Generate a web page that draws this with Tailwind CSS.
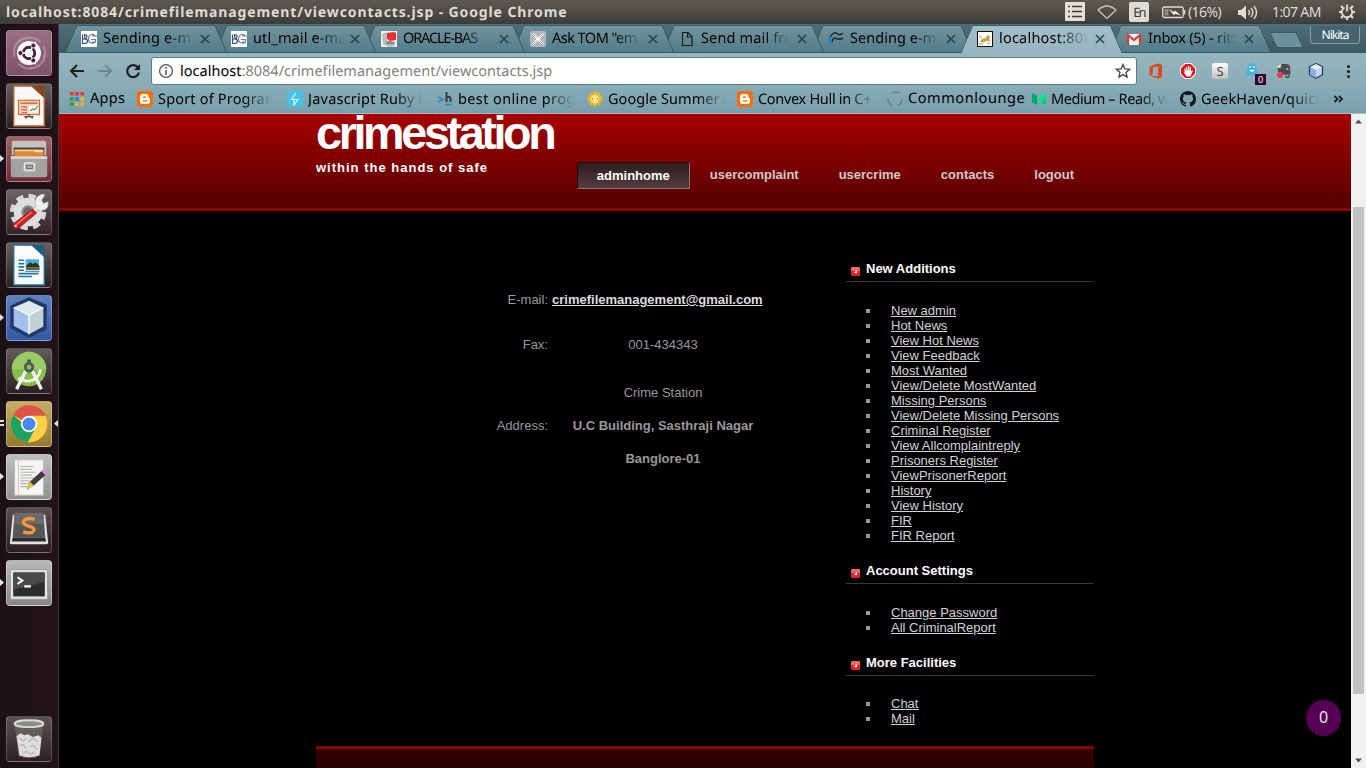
<!DOCTYPE html>
<html lang="en">
<head>
<meta charset="utf-8">
<title>viewcontacts.jsp</title>
<script src="https://cdn.jsdelivr.net/npm/@tailwindcss/browser@4"></script>
</head>
<body class="w-[1366px] h-[768px] overflow-hidden bg-black flex flex-col font-['Noto_Sans',sans-serif]">

<!-- System panel -->
<header class="h-6 shrink-0 flex items-center bg-gradient-to-b from-[#5c5a50] to-[#3e3c37] text-[#dfdbd2] text-[14px] leading-6 whitespace-nowrap">
  <div class="w-[1064px] pl-[6px] font-bold"><span data-w="524">localhost:8084/crimefilemanagement/viewcontacts.jsp - Google Chrome</span></div>
  <svg class="w-[22px] h-5" viewBox="0 0 22 20"><rect x="1" y="0" width="20" height="19" rx="1" fill="#e4e0d8"/><path d="M4 4.500h2M8 4.500h10M4 9.500h2M8 9.500h10M4 14.500h2M8 14.500h10" stroke="#3f3d38" stroke-width="1.400"/></svg>
  <svg class="ml-[10px] w-[22px] h-5" viewBox="0 0 22 20"><path d="M2 8Q11 0 20 8L11 16.500Z" fill="none" stroke="#c9c5bc" stroke-width="1.300" stroke-linejoin="round"/></svg>
  <span class="ml-[11px] w-5 h-5 rounded-[2px] bg-[#dfdbd2] text-[#3c3b37] text-[13px] leading-[21px] text-center"><span data-w="14">En</span></span>
  <svg class="ml-[13px] w-6 h-4" viewBox="0 0 24 16"><rect x=".7" y="3" width="20.500" height="10.500" rx="1.500" fill="none" stroke="#dfdbd2" stroke-width="1.300"/><path d="M22.500 6v4.500" stroke="#dfdbd2" stroke-width="1.600"/><rect x="2.500" y="5" width="4" height="6.500" fill="#8d8a82"/><path d="M6.500 5l5.500 3 1-1.500 6 5-6-1.800-1 1.500z" fill="#f3f0e8"/></svg>
  <span class="ml-[2px] w-[38px]"><span data-w="37">(16%)</span></span>
  <svg class="ml-[11px] w-[22px] h-5" viewBox="0 0 22 20"><path d="M1 8h3l5-4.500v14L4 13H1z" fill="#dfdbd2"/><path d="M11.500 8q2 2.500 0 5M14 6q3.800 4.500 0 9M16.800 4q5.500 6.500 0 13" fill="none" stroke="#dfdbd2" stroke-width="1.500"/></svg>
  <span class="ml-[13px] w-[54px]"><span data-w="53">1:07 AM</span></span>
  <svg class="ml-[12px] w-[18px] h-[18px]" viewBox="0 0 18 18"><g fill="none" stroke="#dfdbd2"><path d="M6.500 4.500a5.200 5.200 0 1 0 5 0" stroke-width="1.800"/><path d="M9 1.500v7" stroke-width="1.800"/><path d="M3 3l2 2M15 3l-2 2M1 9h3M14 9h3M3 15l2-2M15 15l-2-2M9 14v3" stroke-width="2.200"/></g></svg>
</header>

<div class="flex flex-1 min-h-0">

<!-- Launcher -->
<aside class="w-[59px] shrink-0 bg-gradient-to-r from-[#1c1016] to-[#211319] border-r border-[#3c3a3d] pl-[6px] pt-[6px] flex flex-col gap-[7px] relative">
  <svg class="w-[46px] h-[46px] rounded-[4px] shrink-0 border border-white/25 bg-gradient-to-b from-[#9c6e84] to-[#7d5268]" viewBox="0 0 46 46"><path d="M8 27C5 14 14 5 26 7M38 16c6 11-2 23-15 23M12 34C22 45 40 38 39 24M7 20C11 6 28 4 35 12" fill="none" stroke="#c9aab8" stroke-opacity=".55" stroke-width="2"/><circle cx="23" cy="23" r="12.500" fill="#fff"/><circle cx="23" cy="23" r="6" fill="none" stroke="#4a2036" stroke-width="3"/><path d="M23 23L30 11M23 23L30 35M23 23H11" stroke="#fff" stroke-width="1.500"/><circle cx="23" cy="23" r="4.300" fill="#fff"/><g fill="#4a2036" stroke="#fff" stroke-width=".8"><circle cx="14" cy="23" r="2.600"/><circle cx="27.500" cy="15.200" r="2.600"/><circle cx="27.500" cy="30.800" r="2.600"/></g></svg>
  <svg class="w-[46px] h-[46px] rounded-[4px] shrink-0 border border-white/20 bg-gradient-to-b from-[#68605f] to-[#2b1f23]" viewBox="0 0 46 46"><path d="M7 2h21l11 11v31H7z" fill="#fbfaf8" stroke="#b5602a" stroke-width="1.500"/><path d="M25 2h14v13z" fill="#8c431d"/><rect x="12" y="17" width="22" height="15" fill="#f8d3bd" stroke="#d4672f" stroke-width="1.200"/><path d="M14 20h18" stroke="#c9562a" stroke-width="1.500"/><path d="M15 24h6M15 27h6M15 30h6" stroke="#c57856" stroke-width="1.600"/><rect x="23" y="23" width="9" height="7" fill="#fff"/><path d="M24 28l3-2 2 1 3-4" fill="none" stroke="#37a049" stroke-width="1.300"/><path d="M18 34h10M19 36l4-3 4 3" fill="none" stroke="#555" stroke-width="1.300"/></svg>
  <svg class="w-[46px] h-[46px] rounded-[4px] shrink-0 border border-white/25 bg-gradient-to-b from-[#9c6568] to-[#702b35]" viewBox="0 0 46 46"><path d="M7 4h32q2 0 2 3v12H5V7q0-3 2-3z" fill="#c4c3c0"/><rect x="7" y="11" width="32" height="9" fill="#4b3c35"/><path d="M8 13h30v7H8z" fill="#f5d5a2"/><path d="M8 15h20l2 1h8v5H8z" fill="#e6872f"/><path d="M4 20h38v20q0 2-2 2H6q-2 0-2-2z" fill="#a3a2a0"/><path d="M4 20h38v3H4z" fill="#d7d6d3"/><rect x="18" y="27" width="11" height="8.500" rx="1" fill="#c9c8c6" stroke="#eee"/><rect x="20.500" y="29.500" width="6" height="3.500" fill="#aaa" stroke="#686868"/></svg>
  <svg class="w-[46px] h-[46px] rounded-[4px] shrink-0 border border-white/20 bg-gradient-to-b from-[#6a6566] to-[#332329]" viewBox="0 0 46 46"><circle cx="22" cy="23" r="16.500" fill="none" stroke="#d6d6d5" stroke-width="5" stroke-dasharray="7.500 5.460"/><circle cx="22" cy="23" r="11" fill="#8d8d8d" stroke="#dededd" stroke-width="8"/><circle cx="22" cy="23" r="5" fill="#6b6b6b"/><path d="M24 23l6-6q-2-8 3-11 4-3 7-1l-4 6 2 3 5-2q1 7-4 9-4 1-7 0l-5 5z" fill="#eee" stroke="#999" stroke-width=".6"/><path d="M27 20l4 4L12 40q-3 2-5-.5T7 35z" fill="#cf2222" stroke="#861616" stroke-width=".8"/><path d="M26 23L10 36" stroke="#ff7c70" stroke-width="1.200"/><circle cx="9" cy="37.500" r="1.300" fill="#fff"/></svg>
  <svg class="w-[46px] h-[46px] rounded-[4px] shrink-0 border border-white/20 bg-gradient-to-b from-[#68605f] to-[#2b1f23]" viewBox="0 0 46 46"><path d="M7 2h21l11 11v31H7z" fill="#fbfbfb" stroke="#1a7098" stroke-width="1.500"/><path d="M25 2h14v13z" fill="#1c5d82"/><path d="M12 18h6M12 21.500h6M12 25h6M12 28.500h6M12 32h21M12 35h14" stroke="#2477a0" stroke-width="1.700"/><rect x="19.500" y="17" width="14" height="10" fill="#55a7dd"/><path d="M20 24l4-4 3 2 3-2 4 4v4H20z" fill="#203b22"/><path d="M20 26h14" stroke="#c99b3b"/><path d="M19 29.500h15" stroke="#2477a0" stroke-width="1.200"/></svg>
  <svg class="w-[46px] h-[46px] rounded-[4px] shrink-0 border border-white/25 bg-gradient-to-b from-[#5d80bd] to-[#3559a2]" viewBox="0 0 46 46"><path d="M23 3L40 10V34L23 42 5 33V11z" fill="#22386b" stroke="#22386b" stroke-width="3" stroke-linejoin="round"/><path d="M23 5L38 12 23 20 7 12z" fill="#dce9e9"/><path d="M7 12l16 8v20L7 31z" fill="#a5bfec"/><path d="M38 12l-15 8v20l15-8z" fill="#c3d1d6"/><path d="M7 12l16 8 15-8M23 20v20" fill="none" stroke="#f4f8fa" stroke-width="1.500"/></svg>
  <svg class="w-[46px] h-[46px] rounded-[4px] shrink-0 border border-white/20 bg-gradient-to-b from-[#625b5d] to-[#2d2025]" viewBox="0 0 46 46"><circle cx="23" cy="21" r="18" fill="#85bd49"/><path d="M5 21a18 18 0 0 1 36 0z" fill="#9bcb65"/><path d="M21 20L10 42M25 20l11 22" stroke="#f3f3f3" stroke-width="3.500"/><path d="M12 30q9 6 16 2 6-3 7-11" fill="none" stroke="#f3f3f3" stroke-width="3"/><circle cx="23" cy="19" r="4" fill="#8ac24c" stroke="#50565a" stroke-width="3"/><path d="M23 11v5" stroke="#50565a" stroke-width="4"/></svg>
  <svg class="w-[46px] h-[46px] rounded-[4px] shrink-0 border border-white/30 bg-gradient-to-b from-[#c5ae68] to-[#967a2c]" viewBox="0 0 46 46"><circle cx="23" cy="23" r="19" fill="#fccf44"/><path d="M23 23L6.500 13.500a19 19 0 0 1 34 1z" fill="#de5145"/><path d="M6.500 13.500A19 19 0 0 0 22 42l8-15-7 1z" fill="#1fa261"/><path d="M23 14.500h17a19 19 0 0 1-18 27.500l8.500-15z" fill="#fccf44"/><circle cx="23" cy="23" r="8.500" fill="#fff"/><circle cx="23" cy="23" r="6.800" fill="#4587f3"/></svg>
  <svg class="w-[46px] h-[46px] rounded-[4px] shrink-0 border border-white/40 bg-gradient-to-b from-[#c0bfbf] to-[#929191]" viewBox="0 0 46 46"><rect x="8" y="5" width="30" height="37" fill="#f5f5f3" stroke="#bdbdbd"/><path d="M12 5v37" stroke="#eebcbc"/><path d="M14 12h14M14 15h12M14 18h16M14 21h12M14 24h14M14 27h10M14 30h12M14 33h8" stroke="#b5b5b5" stroke-width="1.200"/><path d="M21 36l3-8L37 16l4 4-13 12z" fill="#3d3d3d"/><path d="M21 36l3-8 4 4z" fill="#e5c92f"/><path d="M36 17l3-2q3 0 3 4l-2 2z" fill="#dd8fd3"/></svg>
  <svg class="w-[46px] h-[46px] rounded-[4px] shrink-0 border border-white/20 bg-gradient-to-b from-[#5b4e53] to-[#2b1d22]" viewBox="0 0 46 46"><path d="M6 7L3 36q0 2 2 2h36q2 0 2-2L40 7z" fill="#e2e2e2"/><path d="M8 5h30l2 26H6z" fill="#565656"/><path d="M8 5h30l1 12H7z" fill="#6a6a6a"/><path d="M6 31h34l1 4H5z" fill="#2b2b2b"/><path d="M29 12q-6-2-10 0-4 4 1 6l6 2q4 2 1 5-4 2-10 0" fill="none" stroke="#f6963b" stroke-width="3.500"/></svg>
  <svg class="w-[46px] h-[46px] rounded-[4px] shrink-0 border border-white/40 bg-gradient-to-b from-[#bab9b9] to-[#878686]" viewBox="0 0 46 46"><rect x="3.500" y="9" width="39" height="31" rx="1" fill="#e5e5e4" stroke="#999"/><rect x="6.500" y="12" width="33" height="25" fill="#2b2d2b"/><path d="M7 12h32v10L7 30z" fill="#494b49"/><path d="M11 17l5 3.500-5 3.500" fill="none" stroke="#fff" stroke-width="2.200"/><path d="M18 26.500h7" stroke="#fff" stroke-width="2.200"/></svg>
  <svg class="mt-auto mb-[6px] w-[46px] h-[46px] rounded-[4px] shrink-0 border border-white/20 bg-gradient-to-b from-[#5c5256] to-[#2d2126]" viewBox="0 0 46 46"><path d="M8 8l4 33q11 4 22 0l4-33z" fill="#6d6a6c" fill-opacity=".7"/><path d="M10 20l4-3 4 2 4-1 5 3 6-2 3 3-2 18q-11 4-21 0z" fill="#dedddb"/><path d="M13 22l4 3 3-3M22 26l5-4 5 4M13 30l4-1 3 4M24 31l4-1 3 4M17 38l3-2 5 3 4-3" fill="none" stroke="#b5b3b2" stroke-width="1.300"/><ellipse cx="23" cy="7" rx="15" ry="3.600" fill="#8c8b89" stroke="#dcdbd8" stroke-width="2"/></svg>
  <svg class="absolute left-0 top-0 w-[59px] h-[744px]" viewBox="0 0 59 744"><g fill="#e4e1e0"><path d="M0 131l4 3.500-4 3.500zM0 290l4 3.500-4 3.500zM0 449l4 3.500-4 3.500zM0 555l4 3.500-4 3.500z"/><path d="M0 396h4v2H0zM0 400h4v2H0zM58 396l-4 3.500 4 3.500z"/></g></svg>
</aside>

<!-- Browser window -->
<main class="flex-1 min-w-0 flex flex-col">

  <!-- Tab strip -->
  <div class="h-[29px] shrink-0 relative bg-gradient-to-b from-[#4f6f78] to-[#3d5a63]">
    <svg class="absolute inset-0 w-[1307px] h-[29px]" viewBox="59 24 1307 29">
      <defs>
        <linearGradient id="tab" x2="0" y2="1"><stop offset="0" stop-color="#73949e"/><stop offset="1" stop-color="#507c88"/></linearGradient>
        <linearGradient id="act" x2="0" y2="1"><stop offset="0" stop-color="#a2bfc8"/><stop offset="1" stop-color="#97b5bf"/></linearGradient>
      </defs>
      <g fill="url(#tab)" stroke="#395963">
        <path d="M1110 53L1121 25.500H1259L1271 53z"/>
        <path d="M812 53L823 25.500H961L973 53z"/>
        <path d="M663 53L674 25.500H812L824 53z"/>
        <path d="M513 53L524 25.500H662L674 53z"/>
        <path d="M364 53L375 25.500H513L525 53z"/>
        <path d="M215 53L227 25.500H364L376 53z"/>
        <path d="M65 53L77 25.500H215L227 53z"/>
      </g>
      <path d="M59 52.500H1366" stroke="#395963"/>
      <path d="M961 53.500L973 25.500H1110L1122 53.500z" fill="url(#act)" stroke="#395963"/>
      <path d="M961.500 53L973 26H1110L1121.500 53z" fill="url(#act)"/>
      <path d="M1270 32.500H1296L1303 47.500H1277z" fill="#6b929d" stroke="#3a5963"/>
    </svg>
    <div class="absolute inset-0 flex text-black text-[14.500px] leading-[27px] whitespace-nowrap pl-[22px] pt-[1px]">
      <div class="w-[150px] flex items-center">
        <svg class="w-4 h-4 mr-[6px] shrink-0" viewBox="0 0 16 16"><path fill="#fff" d="M0 0h16v16H0z"/><path d="M1.500 3.500v9h2.500q2.500-.5 2.500-2.500T4 8H1.500M4 8q2-.5 2-2.500T3.500 3.500z" fill="none" stroke="#3c4f78" stroke-width="1.200"/><path d="M14 4.500q-4-2.500-6 1-1.500 4 1 6 3 1.500 5.500-.5V8.500H10M11 5h5M11 11h4" fill="none" stroke="#6e7f9e" stroke-width="1.200"/></svg>
        <span class="w-[91px] pb-[3px] [mask-image:linear-gradient(to_right,#000_70%,transparent)]"><span data-w="91">Sending e-ma</span></span>
        <svg class="ml-[6px] w-[10px] h-[10px] shrink-0" viewBox="0 0 10 10"><path d="M1 1l8 8M9 1L1 9" stroke="#2f4247" stroke-width="1.700"/></svg>
      </div>
      <div class="w-[150px] flex items-center">
        <svg class="w-4 h-4 mr-[6px] shrink-0" viewBox="0 0 16 16"><path fill="#fff" d="M0 0h16v16H0z"/><path d="M1.500 3.500v9h2.500q2.500-.5 2.500-2.500T4 8H1.500M4 8q2-.5 2-2.500T3.500 3.500z" fill="none" stroke="#3c4f78" stroke-width="1.200"/><path d="M14 4.500q-4-2.500-6 1-1.500 4 1 6 3 1.500 5.500-.5V8.500H10M11 5h5M11 11h4" fill="none" stroke="#6e7f9e" stroke-width="1.200"/></svg>
        <span class="w-[91px] pb-[3px] [mask-image:linear-gradient(to_right,#000_70%,transparent)]"><span data-w="91">utl_mail e-ma</span></span>
        <svg class="ml-[6px] w-[10px] h-[10px] shrink-0" viewBox="0 0 10 10"><path d="M1 1l8 8M9 1L1 9" stroke="#2f4247" stroke-width="1.700"/></svg>
      </div>
      <div class="w-[149px] flex items-center">
        <svg class="w-4 h-4 mr-[6px] shrink-0" viewBox="0 0 16 16"><path fill="#f1f1f1" d="M0 0h16v16H0z"/><path d="M1 3l5-2v9l8 1v4l-6 1-6-3z" fill="#b9bcbd"/><path d="M6 2l7-1 2 1v7l-6 1-3-2z" fill="#f02a2c"/><path d="M6 10l8 1-1 2H5z" fill="#888"/></svg>
        <span class="w-[89px] pb-[3px] [mask-image:linear-gradient(to_right,#000_65%,transparent)]"><span data-w="89">ORACLE-BAS</span></span>
        <svg class="ml-[7px] w-[10px] h-[10px] shrink-0" viewBox="0 0 10 10"><path d="M1 1l8 8M9 1L1 9" stroke="#2f4247" stroke-width="1.700"/></svg>
      </div>
      <div class="w-[149px] flex items-center">
        <svg class="w-4 h-4 mr-[6px] shrink-0" viewBox="0 0 16 16"><rect width="16" height="16" rx="2" fill="#b0b5b8"/><path d="M3.500 2.500l10 10-1 1-10-10zM12.500 2.500l1 1-10 10-1-1z" fill="#b0b5b8" stroke="#fff" stroke-width="1"/></svg>
        <span class="w-[89px] pb-[3px] [mask-image:linear-gradient(to_right,#000_70%,transparent)]"><span data-w="89">Ask TOM "em</span></span>
        <svg class="ml-[7px] w-[10px] h-[10px] shrink-0" viewBox="0 0 10 10"><path d="M1 1l8 8M9 1L1 9" stroke="#2f4247" stroke-width="1.700"/></svg>
      </div>
      <div class="w-[149px] flex items-center">
        <svg class="w-4 h-4 mr-[6px] shrink-0" viewBox="0 0 16 16"><path d="M3.500 1.500h5.500l4 4v9H3.500zM8.500 1.500v4.500H13" fill="none" stroke="#1c1c1c" stroke-width="1.200"/></svg>
        <span class="w-[89px] pb-[3px] [mask-image:linear-gradient(to_right,#000_70%,transparent)]"><span data-w="89">Send mail fro</span></span>
        <svg class="ml-[7px] w-[10px] h-[10px] shrink-0" viewBox="0 0 10 10"><path d="M1 1l8 8M9 1L1 9" stroke="#2f4247" stroke-width="1.700"/></svg>
      </div>
      <div class="w-[149px] flex items-center">
        <svg class="w-4 h-4 mr-[6px] shrink-0" viewBox="0 0 16 16"><path d="M2 6q4-6 7-3.500T15 2M4 11q1-5 4.500-3.500T15 7" fill="none" stroke="#202b30" stroke-width="1.600"/><path d="M0 6l3 1 1 7-3-3z" fill="#2089bf"/></svg>
        <span class="w-[89px] pb-[3px] [mask-image:linear-gradient(to_right,#000_70%,transparent)]"><span data-w="89">Sending e-ma</span></span>
        <svg class="ml-[7px] w-[10px] h-[10px] shrink-0" viewBox="0 0 10 10"><path d="M1 1l8 8M9 1L1 9" stroke="#2f4247" stroke-width="1.700"/></svg>
      </div>
      <div class="w-[149px] flex items-center">
        <svg class="w-4 h-4 mr-[6px] shrink-0" viewBox="0 0 16 16"><rect x=".5" y=".5" width="15" height="15" fill="#fff" stroke="#111"/><path d="M3 11l2-3 4-1 1-3 1.500 1L13 4l-.5 3 .5 4-3-1.500-3 2z" fill="#d19b37"/><path d="M2 5l3 2M2 13h4M10 12l3 1" stroke="#8a7443" stroke-width=".8"/></svg>
        <span class="w-[89px] pb-[3px] [mask-image:linear-gradient(to_right,#000_65%,transparent)]"><span data-w="89">localhost:808</span></span>
        <svg class="ml-[7px] w-[10px] h-[10px] shrink-0" viewBox="0 0 10 10"><path d="M1 1l8 8M9 1L1 9" stroke="#2f4247" stroke-width="1.700"/></svg>
      </div>
      <div class="w-[149px] flex items-center">
        <svg class="w-4 h-4 mr-[6px] shrink-0" viewBox="0 0 16 16"><path d="M1 3h14v11H1z" fill="#f2f2f2"/><path d="M2 14V4l6 5 6-5v10" fill="none" stroke="#d93d32" stroke-width="2.200"/></svg>
        <span class="w-[89px] pb-[3px] [mask-image:linear-gradient(to_right,#000_70%,transparent)]"><span data-w="88">Inbox (5) - rit:</span></span>
        <svg class="ml-[7px] w-[10px] h-[10px] shrink-0" viewBox="0 0 10 10"><path d="M1 1l8 8M9 1L1 9" stroke="#2f4247" stroke-width="1.700"/></svg>
      </div>
    </div>
    <div class="absolute right-[6px] top-[2px] w-[50px] h-[18px] rounded-b-[4px] border border-t-0 border-[#86a0a8] bg-[#45646d] text-white text-[12px] leading-[18px] text-center"><span data-w="34">Nikita</span></div>
  </div>

  <!-- Toolbar -->
  <div class="h-9 shrink-0 bg-gradient-to-b from-[#97b5bf] to-[#87abb6] flex items-center pl-[10px]">
    <svg class="w-4 h-4" viewBox="0 0 16 16"><path d="M15 8H2M8 2L2 8l6 6" fill="none" stroke="#1d1d1d" stroke-width="2"/></svg>
    <svg class="ml-3 w-4 h-4" viewBox="0 0 16 16"><path d="M1 8h13M8 2l6 6-6 6" fill="none" stroke="#6e8992" stroke-width="2"/></svg>
    <svg class="ml-3 w-4 h-4" viewBox="0 0 16 16"><path d="M13 4.500A6 6 0 1 0 14 9.500" fill="none" stroke="#1d1d1d" stroke-width="2.200"/><path d="M15 1v6H9z" fill="#1d1d1d"/></svg>
    <div class="ml-[10px] w-[986px] h-7 bg-white border border-[#5f7d87] rounded-[3px] flex items-center pl-[6px] text-[14.500px] leading-[26px] whitespace-nowrap">
      <svg class="w-4 h-4 mr-[6px]" viewBox="0 0 16 16"><circle cx="8" cy="8" r="6.400" fill="none" stroke="#555" stroke-width="1.300"/><path d="M8 7v5M8 4v1.700" stroke="#555" stroke-width="1.600"/></svg>
      <span class="text-[#7f7f7f]" data-w="350"><span class="text-black">localhost</span>:8084/crimefilemanagement/viewcontacts.jsp</span>
      <svg class="ml-auto mr-[5px] w-4 h-4" viewBox="0 0 16 16"><path d="M8 1.500l1.900 4.400 4.700.4-3.600 3.100 1.100 4.700L8 11.600l-4.100 2.500L5 9.400 1.400 6.300l4.700-.4z" fill="none" stroke="#444" stroke-width="1.300"/></svg>
    </div>
    <svg class="ml-[11px] w-4 h-4" viewBox="0 0 16 16"><path d="M1.500 3.500L10 .5l4 1.200v12.600l-4 1.200-8.500-3 8.500 1V3.200L4.800 4.500v6.800l-3.300 1.200z" fill="#e0481c"/></svg>
    <svg class="ml-4 w-4 h-4" viewBox="0 0 16 16"><path d="M5 0h6l5 5v6l-5 5H5l-5-5V5z" fill="#fff"/><path d="M5.300 1h5.400L15 5.300v5.400L10.700 15H5.300L1 10.700V5.300z" fill="#e4151c"/><path d="M5 8v2l2 3h3l2-4.500-1.500.500V8zM8.700 8V3M6.800 8V4M5 9V5.500M10.400 9V4" fill="#fff" stroke="#fff" stroke-width="1.200"/></svg>
    <span class="ml-4 w-4 h-4 rounded-[2px] bg-gradient-to-b from-white to-[#bfbfbf] text-[#444] text-[13px] leading-4 text-center">S</span>
    <span class="ml-4 w-5 h-5 relative"><svg class="w-4 h-4 mt-[1px]" viewBox="0 0 16 16"><path d="M3 8q0-7 5-7t5 7l1 5-2 1-2-1-2 1-2-1-2 1-2-1z" fill="#4ab3e4"/><path d="M6 4v2M10 4v2M6 8q2 2 4 0" stroke="#fff" fill="none" stroke-width="1.200"/></svg><span class="absolute left-[11px] top-[13px] w-[11px] h-[11px] bg-[#35002f] text-white text-[9px] leading-[11px] text-center">0</span></span>
    <svg class="ml-3 w-4 h-4" viewBox="0 0 16 16"><path d="M5.500 1h5q3 0 3.500 3 1 6-.500 10-1 1.500-4 1v-3.500H5Q2 11 1.500 5H5z" fill="#4d4d4d"/><path d="M1 4.500L4.500 1v3.500z" fill="#eee"/><path d="M10 6q2-1 2 1M10 12q1 1.500 2.500 0" stroke="#ddd" fill="none"/><circle cx="4" cy="12" r="3" fill="#f23b4d"/></svg>
    <svg class="ml-4 w-4 h-4" viewBox="0 0 16 16"><path d="M8 .7l6.500 3v8L8 15.300l-6.500-3.600v-8z" fill="#c3d4e8" stroke="#26396b" stroke-width="1.300"/><path d="M2 4l6 3v8l-6-3z" fill="#8cabdf"/><path d="M2 4l6-3 6 3-6 3z" fill="#e6eef2"/></svg>
    <svg class="ml-4 w-4 h-4" viewBox="0 0 16 16"><g fill="#1d1d1d"><circle cx="8.500" cy="3.500" r="1.600"/><circle cx="8.500" cy="8.500" r="1.600"/><circle cx="8.500" cy="13.500" r="1.600"/></g></svg>
  </div>

  <!-- Bookmarks bar -->
  <div class="h-[25px] shrink-0 bg-gradient-to-b from-[#87abb6] to-[#779fab] border-b border-[#a0bcc4] flex text-black text-[14.500px] leading-[18px] whitespace-nowrap pl-[10px]">
    <div class="w-[68px] flex"><svg class="w-4 h-4 mt-[2px] mr-[5px]" viewBox="0 0 16 16"><path d="M1 1h3.600v3.600H1zM6.200 1h3.600v3.600H6.200zM11.400 1H15v3.600h-3.600z" fill="#e8392f"/><path d="M1 6.200h3.600v3.600H1z" fill="#2ba14b"/><path d="M6.200 6.200h3.600v3.600H6.200z" fill="#2f7de9"/><path d="M11.400 6.200H15v3.600h-3.600zM11.400 11.400H15V15h-3.600zM6.200 11.400h3.600V15H6.200z" fill="#f6b31d"/><path d="M1 11.400h3.600V15H1z" fill="#2ba14b"/></svg><span data-w="35">Apps</span></div>
    <div class="w-[150px] flex"><svg class="w-4 h-4 mt-[2px] mr-[5px]" viewBox="0 0 16 16"><rect width="16" height="16" rx="3" fill="#fb6c0b"/><path d="M6 3h3q2.500 0 2.500 3 0 1 .8 1t.7 1v2q0 3-3 3H6q-3 0-3-3V6q0-3 3-3z" fill="#fff"/><path d="M6.300 6.200h2M6.300 9.900h3.500" stroke="#fb6c0b" stroke-width="1.400" stroke-linecap="round"/></svg><span class="w-[114px] [mask-image:linear-gradient(to_right,#000_75%,transparent)]"><span data-w="114">Sport of Program</span></span></div>
    <div class="w-[150px] flex"><svg class="w-4 h-4 mt-[2px] mr-[5px]" viewBox="0 0 16 16"><path fill="#42c3e5" d="M0 0h16v16H0z"/><path d="M9 2L4.500 8.500H11L7 14V8.500" fill="none" stroke="#e4f7fc" stroke-width="1.100"/></svg><span class="w-[116px] [mask-image:linear-gradient(to_right,#000_75%,transparent)]"><span data-w="115">Javascript Ruby i</span></span></div>
    <div class="w-[150px] flex"><svg class="w-4 h-4 mt-[2px] mr-[5px]" viewBox="0 0 16 16"><path d="M1 6l5 2.500L1 11" fill="none" stroke="#3683c2" stroke-width="1.500"/><path d="M9.500 1v10M9.500 6.500q4-2 4 1V11" fill="none" stroke="#333b40" stroke-width="1.900"/><path d="M8 13.500h7" stroke="#3683c2" stroke-width="1.500"/></svg><span class="w-[116px] [mask-image:linear-gradient(to_right,#000_75%,transparent)]"><span data-w="115">best online progr</span></span></div>
    <div class="w-[150px] flex"><svg class="w-4 h-4 mt-[2px] mr-[5px]" viewBox="0 0 16 16"><path d="M8 0l2 2.200 3-.5.5 3L16 8l-2.500 3-.5 2.700-3-.2L8 16l-2-2.300-3 .3-.5-3L0 8l2.500-3 .5-3 3 .200z" fill="#f7b817"/><circle cx="8" cy="8" r="4.200" fill="#fbe6a0"/><path d="M6.500 6.500L5 8l1.500 1.500M9.500 6.500L11 8 9.500 9.500" fill="none" stroke="#dc9d10"/></svg><span class="w-[118px] [mask-image:linear-gradient(to_right,#000_75%,transparent)]"><span data-w="118">Google Summer o</span></span></div>
    <div class="w-[150px] flex"><svg class="w-4 h-4 mt-[2px] mr-[5px]" viewBox="0 0 16 16"><rect width="16" height="16" rx="3" fill="#fb6c0b"/><path d="M6 3h3q2.500 0 2.500 3 0 1 .8 1t.7 1v2q0 3-3 3H6q-3 0-3-3V6q0-3 3-3z" fill="#fff"/><path d="M6.300 6.200h2M6.300 9.900h3.500" stroke="#fb6c0b" stroke-width="1.400" stroke-linecap="round"/></svg><span class="w-[118px] [mask-image:linear-gradient(to_right,#000_75%,transparent)]"><span data-w="117">Convex Hull in C+</span></span></div>
    <div class="w-[144px] flex"><svg class="w-4 h-4 mt-[2px] mr-[5px]" viewBox="0 0 16 16"><circle cx="8" cy="8" r="7" fill="none" stroke="#6d7f86" stroke-width="1.500" stroke-dasharray="8 6.660"/></svg><span data-w="110">Commonlounge</span></div>
    <div class="w-[149px] flex"><svg class="w-4 h-4 mt-[2px] mr-[4px]" viewBox="0 0 16 16"><path d="M1 2l5 2.500V14l-5-2.500z" fill="#00a866"/><path d="M6 4.500L10.500 12 15 4v10l-4.500-2z" fill="#00d07e"/><path d="M6 4.500l4.500 8L8 13z" fill="#00e58b"/><path d="M10.500 2L15 4l-4 7-2-3z" fill="#12e08c"/></svg><span class="w-[117px] [mask-image:linear-gradient(to_right,#000_75%,transparent)]"><span data-w="116">Medium – Read, w</span></span></div>
    <div class="w-[154px] flex"><svg class="w-4 h-4 mt-[2px] mr-[5px]" viewBox="0 0 16 16"><path d="M8 0C3.580 0 0 3.580 0 8c0 3.540 2.290 6.530 5.470 7.590.4.070.550-.170.550-.380v-1.490c-2.230.480-2.700-.940-2.700-.940-.360-.930-.890-1.180-.890-1.180-.730-.500.060-.490.060-.490.800.060 1.230.830 1.230.830.720 1.210 1.870.870 2.330.660.070-.520.280-.870.510-1.070-1.780-.200-3.640-.890-3.640-3.950 0-.870.310-1.590.820-2.150-.080-.200-.360-1.020.080-2.120 0 0 .670-.210 2.200.820a7.600 7.600 0 0 1 4 0c1.530-1.040 2.200-.820 2.200-.820.440 1.100.160 1.920.080 2.120.510.560.820 1.270.820 2.150 0 3.070-1.870 3.750-3.650 3.950.290.250.540.730.540 1.480v2.200c0 .210.150.460.550.380A8 8 0 0 0 16 8c0-4.420-3.580-8-8-8z" fill="#16191b"/></svg><span class="w-[118px] [mask-image:linear-gradient(to_right,#000_75%,transparent)]"><span data-w="118">GeekHaven/quick</span></span></div>
    <svg class="mt-[5px] -ml-px w-3 h-3" viewBox="0 0 12 12"><path d="M1.500 2l3 3-3 3M6 2l3 3-3 3" fill="none" stroke="#1d1d1d" stroke-width="1.800"/></svg>
  </div>

  <!-- Page viewport -->
  <div class="flex-1 min-h-0 flex">
    <div class="flex-1 min-w-0 bg-black text-[#999] text-[13px] leading-[15px] font-['Liberation_Sans',Arial,sans-serif] relative">
      <div class="h-[97px] border-b-[3px] border-[#870500] bg-gradient-to-b from-[#a80000] to-[#560000]">
        <div class="ml-[257px] w-[778px] flex justify-between text-white font-bold">
          <div>
            <h1 class="text-[46.800px] leading-[38px] tracking-[-3.400px]">crimestation</h1>
            <p class="mt-2 tracking-[1px]">within the hands of safe</p>
          </div>
          <nav class="mt-12 h-[27px] flex text-[#d0caca] leading-[25px]">
            <a class="px-[19px] border border-t-[#1c0f0f] border-l-[#1c0f0f] border-r-[#8a7676] border-b-[#8a7676] bg-gradient-to-b from-[#2e1d1e] to-[#513d3d] text-white">adminhome</a>
            <a class="px-5">usercomplaint</a>
            <a class="px-5">usercrime</a>
            <a class="px-5">contacts</a>
            <a class="px-5">logout</a>
          </nav>
        </div>
      </div>

      <div class="ml-[257px] w-[778px] h-[535px] flex justify-between">
        <table class="ml-[174px] mt-[60px] h-[210px] w-[288px] border-collapse">
          <tbody>
            <tr class="h-[57px]"><td class="w-[58px] text-right">E-mail:</td><td class="pl-1 text-left"><a class="font-bold underline text-[#ddd]">crimefilemanagement@gmail.com</a></td></tr>
            <tr class="h-[33px]"><td class="text-right">Fax:</td><td class="pr-0 text-center">001-434343</td></tr>
            <tr class="h-[129px]"><td class="text-right">Address:</td><td class="pr-0 text-center leading-[33px]">Crime Station<br><b>U.C Building, Sasthraji Nagar</b><br><b>Banglore-01</b></td></tr>
          </tbody>
        </table>

        <div class="w-[248px] pt-[50px] text-[#d3d3d3]">
          <h2 class="h-[21px] border-b border-[#363636] text-white font-bold flex pl-[5px]"><svg class="mt-[6px] mr-[6px] w-[9px] h-[9px]" viewBox="0 0 9 9"><rect width="9" height="9" rx="1.500" fill="#e5252a"/><path d="M1 0h7l1 1v3H0V1z" fill="#f0686a"/><path d="M6 3v3H3z" fill="#fff"/></svg>New Additions</h2>
          <ul class="mt-[21px] ml-5 pl-[25px] underline relative">
            <li>New admin</li><li>Hot News</li><li>View Hot News</li><li>View Feedback</li><li>Most Wanted</li><li>View/Delete MostWanted</li><li>Missing Persons</li><li>View/Delete Missing Persons</li><li>Criminal Register</li><li>View Allcomplaintreply</li><li>Prisoners Register</li><li>ViewPrisonerReport</li><li>History</li><li>View History</li><li>FIR</li><li>FIR Report</li>
            <span class="absolute left-0 top-0 w-1 h-full bg-[linear-gradient(transparent_6px,#999_6px,#999_10px,transparent_10px)] bg-[length:4px_15px]"></span>
          </ul>
          <h2 class="mt-5 h-[21px] border-b border-[#363636] text-white font-bold flex pl-[5px]"><svg class="mt-[6px] mr-[6px] w-[9px] h-[9px]" viewBox="0 0 9 9"><rect width="9" height="9" rx="1.500" fill="#e5252a"/><path d="M1 0h7l1 1v3H0V1z" fill="#f0686a"/><path d="M6 3v3H3z" fill="#fff"/></svg>Account Settings</h2>
          <ul class="mt-[21px] ml-5 pl-[25px] underline relative">
            <li>Change Password</li><li>All CriminalReport</li>
            <span class="absolute left-0 top-0 w-1 h-full bg-[linear-gradient(transparent_6px,#999_6px,#999_10px,transparent_10px)] bg-[length:4px_15px]"></span>
          </ul>
          <h2 class="mt-5 h-[21px] border-b border-[#363636] text-white font-bold flex pl-[5px]"><svg class="mt-[6px] mr-[6px] w-[9px] h-[9px]" viewBox="0 0 9 9"><rect width="9" height="9" rx="1.500" fill="#e5252a"/><path d="M1 0h7l1 1v3H0V1z" fill="#f0686a"/><path d="M6 3v3H3z" fill="#fff"/></svg>More Facilities</h2>
          <ul class="mt-5 ml-5 pl-[25px] underline relative">
            <li>Chat</li><li>Mail</li>
            <span class="absolute left-0 top-0 w-1 h-full bg-[linear-gradient(transparent_6px,#999_6px,#999_10px,transparent_10px)] bg-[length:4px_15px]"></span>
          </ul>
        </div>
      </div>
      <footer class="ml-[257px] w-[778px] h-[22px] border-t-[3px] border-[#870500] bg-gradient-to-b from-[#380000] to-[#280000]"></footer>
      <div class="absolute left-[1247px] top-[586px] w-[35px] h-9 rounded-full bg-[#560056] text-[#eee] text-[16px] leading-[35px] text-center font-['Open_Sans',sans-serif]">0</div>
    </div>
    <!-- Scrollbar -->
    <div class="w-[15px] shrink-0 bg-[#f1f1f1] flex flex-col items-center">
      <svg class="w-[15px] h-[15px]" viewBox="0 0 15 15"><path d="M7.500 5.500L11 9.500H4z" fill="#505050"/></svg>
      <div class="mt-[78px] w-[11px] h-[487px] bg-[#c1c1c1]"></div>
      <svg class="mt-auto w-[15px] h-[15px]" viewBox="0 0 15 15"><path d="M7.500 9.500L4 5.500h7z" fill="#505050"/></svg>
    </div>
  </div>
</main>
</div>

<script>
// Track each label out (or in) to its nominal width
document.querySelectorAll('[data-w]').forEach(function (el) {
  el.style.display = 'inline-block';
  el.style.flexShrink = '0';
  el.style.textRendering = 'geometricPrecision';
  var s = 0;
  for (var i = 0; i < 3; i++) {
    s += (el.dataset.w - el.getBoundingClientRect().width) / el.textContent.length;
    el.style.letterSpacing = s.toFixed(3) + 'px';
  }
});
</script>
</body>
</html>
